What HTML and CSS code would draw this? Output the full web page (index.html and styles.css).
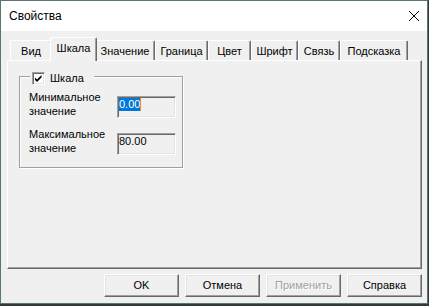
FILE: index.html
```html
<!DOCTYPE html>
<html lang="ru">
<head>
<meta charset="utf-8">
<title>Свойства</title>
<link rel="stylesheet" href="styles.css">
</head>
<body>
<div class="window">
  <div class="titlebar">
    <span class="title">Свойства</span>
    <svg class="close" width="10" height="10" viewBox="0 0 10 10" aria-label="Закрыть">
      <path d="M0 0 L10 10 M10 0 L0 10" stroke="#000" stroke-width="1" fill="none"/>
    </svg>
  </div>
  <div class="client">
    <div class="tabs">
      <div class="tab tab-vid">Вид</div>
      <div class="tab tab-scale is-active">Шкала</div>
      <div class="tab tab-value">Значение</div>
      <div class="tab tab-border">Граница</div>
      <div class="tab tab-color">Цвет</div>
      <div class="tab tab-font">Шрифт</div>
      <div class="tab tab-link">Связь</div>
      <div class="tab tab-hint">Подсказка</div>
    </div>
    <div class="panel">
      <div class="group">
        <div class="legend">
          <span class="checkbox">
            <svg width="9" height="9" viewBox="0 0 9 9"><path d="M1 3.5 L3 5.5 L7.5 1 L7.5 3.5 L3 8 L1 6 Z" fill="#000"/></svg>
          </span>
          <span class="legend-text">Шкала</span>
        </div>
        <div class="row">
          <div class="label">Минимальное<br>значение</div>
          <div class="edit"><span class="sel">0.00</span><span class="caret"></span></div>
        </div>
        <div class="row row-next">
          <div class="label">Максимальное<br>значение</div>
          <div class="edit">80.00</div>
        </div>
      </div>
    </div>
    <div class="buttons">
      <div class="btn">OK</div>
      <div class="btn">Отмена</div>
      <div class="btn is-disabled">Применить</div>
      <div class="btn">Справка</div>
    </div>
  </div>
</div>
</body>
</html>
```

FILE: styles.css
```css
* {
  box-sizing: border-box;
}

html,
body {
  margin: 0;
  padding: 0;
}

body {
  width: 429px;
  height: 306px;
  overflow: hidden;
  background: #2e3a3c;
  font-family: "Liberation Sans", Arial, sans-serif;
  font-size: 11px;
  line-height: 13px;
  color: #000;
}

.window {
  width: 428px;
  height: 304px;
  border: 1px solid #5b7476;
  background: #f0f0f0;
  display: flex;
  flex-direction: column;
}

.titlebar {
  height: 30px;
  flex: none;
  background: #fff;
  display: flex;
  align-items: center;
  justify-content: space-between;
  padding: 0 8px;
}

.title {
  font-size: 12px;
  line-height: 30px;
}

.close {
  display: block;
  margin-top: -1px;
}

.client {
  flex: 1;
  display: flex;
  flex-direction: column;
  padding: 6px 5px 0 6px;
}

.tabs {
  display: flex;
  align-items: flex-end;
  height: 23px;
  padding-left: 3px;
  position: relative;
  z-index: 1;
}

.tab {
  flex: none;
  height: 20px;
  padding-top: 4px;
  text-align: center;
  white-space: nowrap;
  background: #f0f0f0;
  border-top: 1px solid #fff;
  border-left: 1px solid #fff;
  border-right: 1px solid #696969;
  box-shadow: inset -1px 0 0 #a0a0a0;
  border-top-left-radius: 2px;
  border-top-right-radius: 2px;
}

.tab.is-active {
  height: 24px;
  margin: 0 -2px -1px;
  position: relative;
  z-index: 2;
}

.tab-vid { width: 42px; }
.tab-scale { width: 47px; }
.tab-value { width: 60px; }
.tab-border { width: 53px; }
.tab-color { width: 43px; }
.tab-font { width: 47px; }
.tab-link { width: 42px; }
.tab-hint { width: 68px; }

.panel {
  width: 415px;
  height: 209px;
  flex: none;
  border-top: 1px solid #fff;
  border-left: 1px solid #fff;
  border-right: 1px solid #696969;
  border-bottom: 1px solid #696969;
  box-shadow: inset -1px -1px 0 #a0a0a0;
  padding: 15px 0 0 11px;
}

.group {
  position: relative;
  width: 164px;
  height: 92px;
  border: 1px solid #a0a0a0;
  box-shadow: inset 1px 1px 0 #fff, 1px 1px 0 #fff;
  padding: 13px 0 0 9px;
}

.legend {
  position: absolute;
  top: -5px;
  left: 10px;
  height: 13px;
  display: flex;
  align-items: center;
  gap: 5px;
  padding: 0 10px 0 2px;
  background: #f0f0f0;
}

.checkbox {
  width: 13px;
  height: 13px;
  flex: none;
  display: flex;
  align-items: center;
  justify-content: center;
  background: #fff;
  border: 1px solid;
  border-color: #a0a0a0 #fff #fff #a0a0a0;
  box-shadow: inset 1px 1px 0 #696969, inset -1px -1px 0 #e3e3e3;
}

.checkbox svg {
  display: block;
}

.row {
  display: flex;
}

.row-next {
  margin-top: 9px;
}

.label {
  width: 88px;
  line-height: 14px;
}

.edit {
  width: 59px;
  height: 22px;
  margin-top: 6px;
  padding: 1px 0 0 1px;
  white-space: nowrap;
  background: #f0f0f0;
  border: 1px solid;
  border-color: #a0a0a0 #fff #fff #a0a0a0;
  box-shadow: inset 1px 1px 0 #696969, inset -1px -1px 0 #e3e3e3;
}

.sel {
  display: inline-block;
  vertical-align: top;
  height: 13px;
  background: #0078d7;
  color: #fff;
}

.caret {
  display: inline-block;
  vertical-align: top;
  width: 1px;
  height: 13px;
  background: #ff8728;
}

.buttons {
  display: flex;
  justify-content: flex-end;
  gap: 6px;
  margin-top: 5px;
}

.btn {
  width: 75px;
  height: 23px;
  line-height: 21px;
  text-align: center;
  background: #f0f0f0;
  border: 1px solid;
  border-color: #fff #696969 #696969 #fff;
  box-shadow: inset -1px -1px 0 #a0a0a0, inset 1px 1px 0 #e3e3e3;
}

.btn.is-disabled {
  color: #a0a0a0;
  text-shadow: 1px 1px 0 #fff;
}
```
